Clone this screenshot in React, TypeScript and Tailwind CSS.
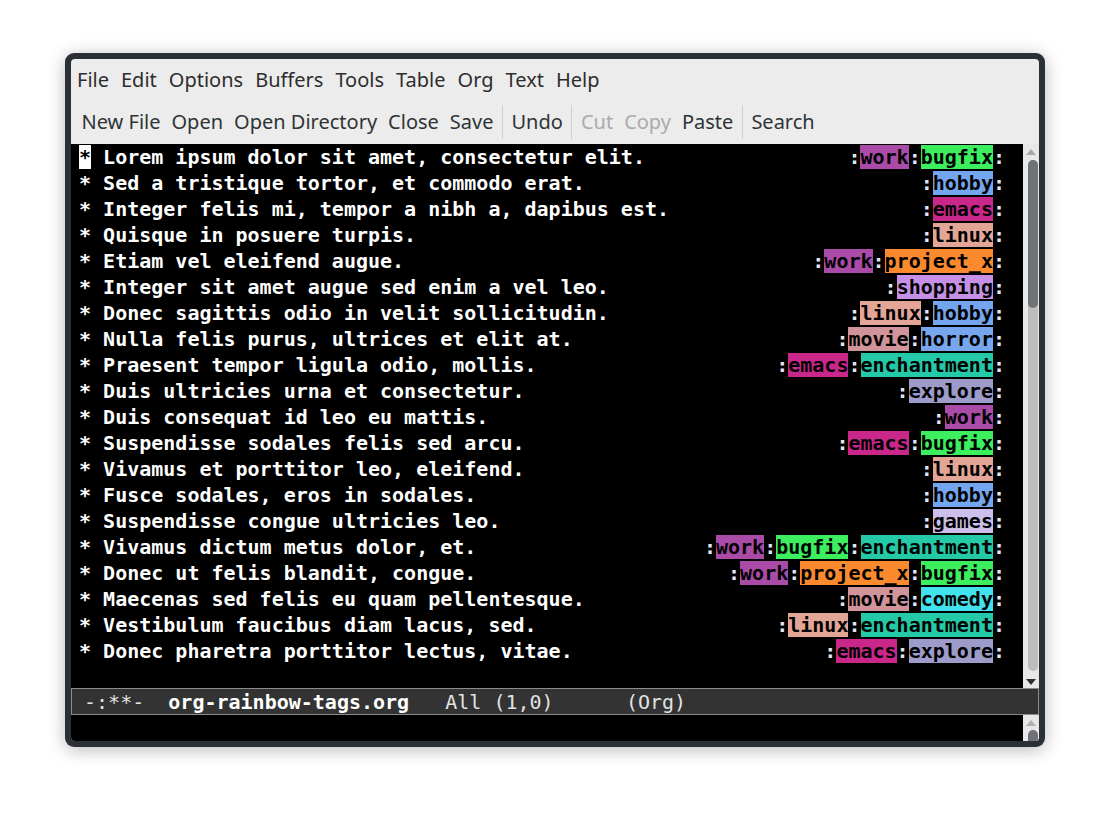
import React from 'react'

const mono = "font-['DejaVu_Sans_Mono','Liberation_Mono',monospace]"
const sans = "font-['Noto_Sans','Open_Sans',sans-serif]"

const tagColors: Record<string, string> = {
    work: 'bg-[#aa4ba8]',
    bugfix: 'bg-[#3bef5e]',
    hobby: 'bg-[#74a6ef]',
    emacs: 'bg-[#c9278a]',
    linux: 'bg-[#e3a696]',
    project_x: 'bg-[#fb8a2e]',
    shopping: 'bg-[#c690e6]',
    movie: 'bg-[#d0949a]',
    horror: 'bg-[#78a6ee]',
    enchantment: 'bg-[#24c9a8]',
    explore: 'bg-[#9d9bc9]',
    games: 'bg-[#cdbfeb]',
    comedy: 'bg-[#41e2ee]',
}

const lines: [string, string[]][] = [
    ['Lorem ipsum dolor sit amet, consectetur elit.', ['work', 'bugfix']],
    ['Sed a tristique tortor, et commodo erat.', ['hobby']],
    ['Integer felis mi, tempor a nibh a, dapibus est.', ['emacs']],
    ['Quisque in posuere turpis.', ['linux']],
    ['Etiam vel eleifend augue.', ['work', 'project_x']],
    ['Integer sit amet augue sed enim a vel leo.', ['shopping']],
    ['Donec sagittis odio in velit sollicitudin.', ['linux', 'hobby']],
    ['Nulla felis purus, ultrices et elit at.', ['movie', 'horror']],
    ['Praesent tempor ligula odio, mollis.', ['emacs', 'enchantment']],
    ['Duis ultricies urna et consectetur.', ['explore']],
    ['Duis consequat id leo eu mattis.', ['work']],
    ['Suspendisse sodales felis sed arcu.', ['emacs', 'bugfix']],
    ['Vivamus et porttitor leo, eleifend.', ['linux']],
    ['Fusce sodales, eros in sodales.', ['hobby']],
    ['Suspendisse congue ultricies leo.', ['games']],
    ['Vivamus dictum metus dolor, et.', ['work', 'bugfix', 'enchantment']],
    ['Donec ut felis blandit, congue.', ['work', 'project_x', 'bugfix']],
    ['Maecenas sed felis eu quam pellentesque.', ['movie', 'comedy']],
    ['Vestibulum faucibus diam lacus, sed.', ['linux', 'enchantment']],
    ['Donec pharetra porttitor lectus, vitae.', ['emacs', 'explore']],
]

const menus = ['File', 'Edit', 'Options', 'Buffers', 'Tools', 'Table', 'Org', 'Text', 'Help']

function Sep() {
    return <div className='w-px h-[34px] bg-[#cfcfcf] mx-[3px]'></div>
}

function Tool({ label, off }: { label: string; off?: boolean }) {
    return <span className={`px-[5.5px] ${off ? 'text-[#ababab]' : 'text-[#2e3436]'}`}>{label}</span>
}

function Colon() {
    return <span className='text-[#e4e6f6]'>:</span>
}

function UpArrow({ color }: { color: string }) {
    return (
        <svg width="10" height="6" viewBox="0 0 10 6" className='mx-auto'>
            <path d="M0 6 L5 0 L10 6 Z" fill={color} />
        </svg>
    )
}

export default function App() {
    return (
        <div className='w-[1110px] h-[825px] bg-white pt-[53px] pl-[65px]'>
            <div className='w-[980px] h-[694px] rounded-[9px] bg-[#2b3036] p-[6px] shadow-[0_3px_18px_rgba(0,0,0,0.28)]'>
                <div className='w-[968px] h-[682px] flex flex-col overflow-hidden rounded-[4px] bg-[#ececec]'>
                    {/* menu bar */}
                    <div className={`h-[41px] flex items-center text-[20px] text-[#2d2d2d] ${sans}`}>
                        {menus.map((m) => (
                            <span key={m} className='px-[6px] pt-[1px]'>{m}</span>
                        ))}
                    </div>

                    {/* tool bar */}
                    <div className={`h-[44px] flex items-center pl-[5px] text-[20px] ${sans}`}>
                        <Tool label='New File' />
                        <Tool label='Open' />
                        <Tool label='Open Directory' />
                        <Tool label='Close' />
                        <Tool label='Save' />
                        <Sep />
                        <Tool label='Undo' />
                        <Sep />
                        <Tool label='Cut' off />
                        <Tool label='Copy' off />
                        <Tool label='Paste' />
                        <Sep />
                        <Tool label='Search' />
                    </div>

                    {/* buffer */}
                    <div className='h-[544px] flex'>
                        <div className={`w-[952px] bg-black pl-[8px] text-[20px] font-bold ${mono}`}>
                            {lines.map(([text, tags], i) => (
                                <div key={i} className='w-[926px] h-[26px] flex items-center justify-between whitespace-pre'>
                                    <span className='text-white flex items-center'>
                                        <span className={`h-[24px] leading-[24px] ${i == 0 ? 'bg-white text-black' : ''}`}>*</span>
                                        <span className='h-[24px] leading-[24px]'>{' ' + text}</span>
                                    </span>
                                    <span className='flex items-center'>
                                        <Colon />
                                        {tags.map((t) => (
                                            <React.Fragment key={t}>
                                                <span className={`h-[24px] leading-[24px] text-black ${tagColors[t]}`}>{t}</span>
                                                <Colon />
                                            </React.Fragment>
                                        ))}
                                    </span>
                                </div>
                            ))}
                        </div>
                        <div className='w-[16px] bg-[#e8e8e8] flex flex-col pt-[5px] pb-[3px]'>
                            <UpArrow color='#a9a9a9' />
                            <div className='flex-1 mt-[5px] mb-[8px] ml-[5px] w-[10px] rounded-full bg-[#bdbdbd] flex flex-col'>
                                <div className='h-[148px] rounded-full bg-[#6f7277]'></div>
                            </div>
                            <svg width="10" height="6" viewBox="0 0 10 6" className='mx-auto'>
                                <path d="M0 0 L10 0 L5 6 Z" fill="#303030" />
                            </svg>
                        </div>
                    </div>

                    {/* mode line */}
                    <div className={`h-[27px] bg-[#333333] border border-[#8c8c8c] flex items-center whitespace-pre text-[20px] text-[#e2e2e2] ${mono}`}>
                        <span>{' -:**-  '}</span>
                        <span className='font-bold text-white'>org-rainbow-tags.org</span>
                        <span>{'   All (1,0)      (Org)'}</span>
                    </div>

                    {/* minibuffer */}
                    <div className='h-[26px] flex'>
                        <div className='w-[952px] bg-black'></div>
                        <div className='w-[16px] bg-[#e8e8e8] flex flex-col pt-[5px]'>
                            <UpArrow color='#b0b0b0' />
                            <div className='flex-1 mt-[4px] ml-[5px] w-[10px] rounded-t-full bg-[#6f7277]'></div>
                        </div>
                    </div>
                </div>
            </div>
        </div>
    )
}
